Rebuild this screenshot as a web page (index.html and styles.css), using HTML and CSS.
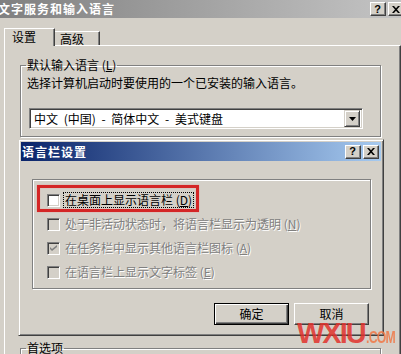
FILE: index.html
```html
<!DOCTYPE html>
<html>
<head>
<meta charset="utf-8">
<link rel="stylesheet" href="styles.css">
</head>
<body>
<div class="win">
  <div class="titlebar">
    <span class="title">文字服务和输入语言</span>
    <span class="tbtns">
      <span class="tbtn"><span class="q">?</span></span>
      <span class="tbtn"><svg width="8" height="7" viewBox="0 0 8 7"><path d="M0 0h2l2 2.2L6 0h2L5 3.5 8 7H6L4 4.8 2 7H0l3-3.5z" fill="#000"/></svg></span>
    </span>
  </div>
  <div class="tabs">
    <div class="tab active">设置</div>
    <div class="tab">高级</div>
  </div>
  <div class="page">
    <fieldset class="group g1">
      <legend>默认输入语言 (<u>L</u>)</legend>
      <div class="desc">选择计算机启动时要使用的一个已安装的输入语言。</div>
      <div class="combo">
        <span class="combo-text">中文 (中国) - 简体中文 - 美式键盘</span>
        <span class="drop"><svg width="7" height="4" viewBox="0 0 7 4"><path d="M0 0h7L3.5 4z" fill="#000"/></svg></span>
      </div>
    </fieldset>
    <fieldset class="group g2">
      <legend>首选项</legend>
    </fieldset>
  </div>
</div>

<div class="dlg">
  <div class="dtitle">
    <span class="dtitle-text">语言栏设置</span>
    <span class="dbtns">
      <span class="tbtn"><span class="q">?</span></span>
      <span class="tbtn"><svg width="8" height="7" viewBox="0 0 8 7"><path d="M0 0h2l2 2.2L6 0h2L5 3.5 8 7H6L4 4.8 2 7H0l3-3.5z" fill="#000"/></svg></span>
    </span>
  </div>
  <div class="dgroup">
    <div class="mark"></div>
    <div class="row">
      <span class="cb"></span>
      <span class="lbl focus">在桌面上显示语言栏 (<u>D</u>)</span>
    </div>
    <div class="row dis">
      <span class="cb"></span>
      <span class="lbl">处于非活动状态时，将语言栏显示为透明 (<u>N</u>)</span>
    </div>
    <div class="row dis">
      <span class="cb"><svg width="7" height="7" viewBox="0 0 7 7"><path d="M0 2l2 2 5-4v2L2 6 0 4z" fill="#808080"/></svg></span>
      <span class="lbl">在任务栏中显示其他语言栏图标 (<u>A</u>)</span>
    </div>
    <div class="row dis">
      <span class="cb"></span>
      <span class="lbl">在语言栏上显示文字标签 (<u>E</u>)</span>
    </div>
  </div>
  <div class="dbuttons">
    <span class="btn def">确定</span>
    <span class="btn">取消</span>
  </div>
</div>

<div class="wm">WXIU<span class="wm-com">.COM</span></div>
</body>
</html>
```
FILE: styles.css
```css
* { box-sizing: border-box; }
html, body { margin: 0; padding: 0; }
body {
  width: 401px;
  height: 354px;
  overflow: hidden;
  position: relative;
  background: #d4d0c8;
  font-family: "Noto Sans CJK SC", "Noto Sans", sans-serif;
  font-size: 12px;
  line-height: 14px;
  color: #000;
}
u { text-decoration: underline; text-underline-offset: 1px; }

.titlebar {
  height: 18px;
  background: linear-gradient(to right, #808080, #c4c4c4);
  display: flex;
  justify-content: space-between;
  align-items: center;
}
.title {
  color: #fff;
  font-weight: bold;
  letter-spacing: 1px;
  margin-left: -2px;
}
.tbtns { display: flex; gap: 2px; margin-right: -3px; }
.tbtn {
  width: 16px;
  height: 14px;
  background: #d4d0c8;
  border: 1px solid;
  border-color: #fff #404040 #404040 #fff;
  box-shadow: inset -1px -1px #808080;
  display: flex;
  align-items: center;
  justify-content: center;
}
.q {
  font-family: "Liberation Sans", sans-serif;
  font-weight: bold;
  font-size: 11px;
  line-height: 11px;
  margin-left: -1px;
}

.tabs {
  height: 27px;
  display: flex;
  align-items: flex-end;
  padding-left: 4px;
}
.tab {
  height: 14px;
  width: 45px;
  border-top: 1px solid #fff;
  border-right: 1px solid #404040;
  box-shadow: inset -1px 0 #808080;
  padding-left: 5px;
}
.tab.active {
  height: 18px;
  width: 51px;
  border-left: 1px solid #fff;
  margin-bottom: -1px;
  padding-left: 7px;
  padding-top: 1px;
  background: #d4d0c8;
  position: relative;
  z-index: 1;
}

.page {
  margin-left: 4px;
  width: 397px;
  height: 309px;
  border-top: 1px solid #fff;
  border-left: 1px solid #fff;
  border-right: 1px solid #404040;
  box-shadow: inset -1px 0 #808080;
  padding: 12px 0 0 15px;
  overflow: hidden;
}

.group {
  margin: 0;
  padding: 0;
  min-width: 0;
  border: 1px solid #808080;
  box-shadow: inset 1px 1px #fff, 1px 1px #fff;
}
.group legend {
  padding: 0 1px;
  margin-left: 5px;
  line-height: 14px;
}
.g1 { width: 361px; height: 79px; }
.g2 { width: 361px; height: 30px; margin-top: 204px; }

.desc { margin: 4px 0 0 6px; }
.combo {
  margin: 18px 0 0 8px;
  width: 334px;
  height: 21px;
  background: #fff;
  border: 1px solid;
  border-color: #808080 #fff #fff #808080;
  box-shadow: inset 1px 1px #404040, inset -1px -1px #d4d0c8;
  display: flex;
  align-items: center;
  justify-content: space-between;
  padding: 2px 2px 2px 4px;
}
.combo-text { word-spacing: 3px; }
.drop {
  width: 16px;
  height: 17px;
  background: #d4d0c8;
  border: 1px solid;
  border-color: #d4d0c8 #404040 #404040 #d4d0c8;
  box-shadow: inset 1px 1px #fff, inset -1px -1px #808080;
  display: flex;
  align-items: center;
  justify-content: center;
}

.dlg {
  position: absolute;
  left: 18px;
  top: 139px;
  width: 366px;
  height: 197px;
  background: #d4d0c8;
  border: 1px solid;
  border-color: #d4d0c8 #404040 #404040 #d4d0c8;
  box-shadow: inset 1px 1px #fff, inset -1px -1px #808080;
  padding: 2px;
  display: flex;
  flex-direction: column;
}
.dtitle {
  height: 19px;
  background: linear-gradient(to right, #0a246a, #a6caf0);
  display: flex;
  align-items: center;
  justify-content: space-between;
  padding: 0 2px 0 1px;
}
.dtitle-text {
  color: #fff;
  font-weight: bold;
  letter-spacing: 1px;
}
.dbtns { display: flex; gap: 2px; }

.dgroup {
  position: relative;
  margin: 18px 0 0 11px;
  width: 339px;
  height: 110px;
  border: 1px solid #808080;
  box-shadow: inset 1px 1px #fff, 1px 1px #fff;
  padding: 8px 0 0 14px;
}
.mark {
  position: absolute;
  left: 4px;
  top: 5px;
  width: 162px;
  height: 27px;
  border: 3px solid #d42626;
  box-shadow: 0 0 1px #f08080, inset 0 0 1px #f08080;
}
.row {
  height: 24px;
  display: flex;
  align-items: center;
}
.cb {
  width: 13px;
  height: 13px;
  background: #fff;
  border: 1px solid;
  border-color: #808080 #fff #fff #808080;
  box-shadow: inset 1px 1px #404040, inset -1px -1px #d4d0c8;
  display: flex;
  align-items: center;
  justify-content: center;
}
.lbl {
  margin-left: 3px;
  padding: 0 1px;
  border: 1px solid transparent;
}
.lbl.focus { border: 1px dotted #000; }
.dis .cb { background: #d4d0c8; }
.dis .lbl { color: #808080; text-shadow: 1px 1px 0 #fff; }

.dbuttons {
  display: flex;
  justify-content: flex-end;
  gap: 5px;
  margin: 14px 12px 0 0;
}
.btn {
  width: 75px;
  height: 22px;
  display: flex;
  align-items: center;
  justify-content: center;
  border: 1px solid;
  border-color: #fff #404040 #404040 #fff;
  box-shadow: inset -1px -1px #808080;
}
.btn.def {
  border-color: #000;
  box-shadow: inset 1px 1px #fff, inset -1px -1px #404040, inset -2px -2px #808080;
}

.wm {
  position: absolute;
  left: 297px;
  top: 323px;
  white-space: nowrap;
  font-family: "Liberation Sans", sans-serif;
  font-weight: bold;
  font-size: 29px;
  line-height: 21px;
  letter-spacing: -2px;
  color: rgba(226, 50, 44, 0.85);
}
.wm-com {
  display: inline-block;
  font-size: 17px;
  letter-spacing: -1px;
  color: rgba(240, 120, 70, 0.85);
  transform: scaleX(0.72);
  transform-origin: left;
  margin-left: 1px;
}
```
